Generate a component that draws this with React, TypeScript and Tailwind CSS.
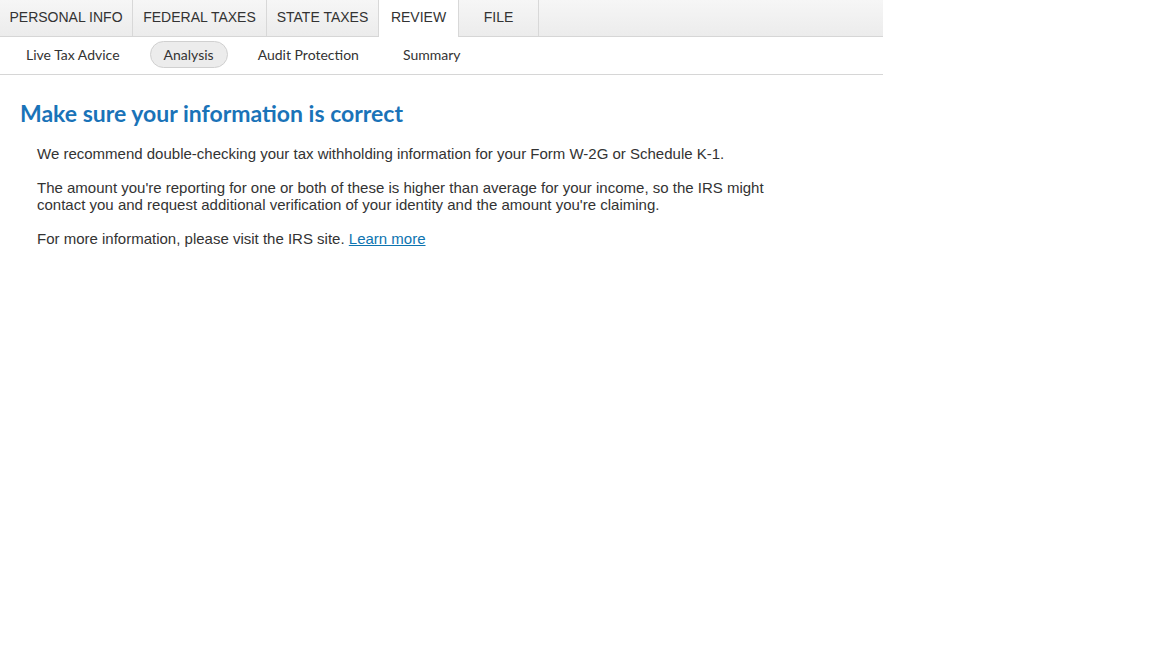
import React from "react";

const tabs = [
  { label: "PERSONAL INFO", w: "w-[133px]" },
  { label: "FEDERAL TAXES", w: "w-[134px]" },
  { label: "STATE TAXES", w: "w-[112px]" },
  { label: "REVIEW", w: "w-[80px]", active: true },
  { label: "FILE", w: "w-[80px]" },
];

const subTabs = [
  { label: "Live Tax Advice" },
  { label: "Analysis", active: true },
  { label: "Audit Protection" },
  { label: "Summary" },
];

export default function App() {
  return (
    <div className="min-h-screen bg-white">
      <div className="w-[883px]">
        {/* Main tabs */}
        <div className="flex h-[37px] border-b border-[#d6d6d6] bg-gradient-to-b from-[#f6f6f6] to-[#ececec]">
          {tabs.map((t) => (
            <div
              key={t.label}
              className={
                "flex items-center justify-center pb-[2px] border-r border-[#d8d8d8] text-[14px] text-[#333] font-['Liberation_Sans',Arial,sans-serif] " +
                t.w +
                (t.active ? " -mb-px bg-white" : "")
              }
            >
              {t.label}
            </div>
          ))}
        </div>

        {/* Sub tabs */}
        <div className="flex h-[38px] items-center gap-[16px] border-b border-[#d6d6d6] pl-[12px] pb-[2px] font-['Lato','Noto_Sans',sans-serif] text-[14px] text-[#333]">
          {subTabs.map((s) => (
            <div
              key={s.label}
              className={
                "rounded-full border px-[13px] py-[2px] " +
                (s.active
                  ? "border-[#d0d0d0] bg-[#ececec]"
                  : "border-transparent")
              }
            >
              {s.label}
            </div>
          ))}
        </div>
      </div>

      {/* Content */}
      <div className="pl-[20px] pt-[21px]">
        <h1 className="font-['Lato','Noto_Sans',sans-serif] text-[23px] font-bold text-[#1a73b8]">
          Make sure your information is correct
        </h1>
        <div className="mt-[14px] pl-[17px] font-['Liberation_Sans',Arial,sans-serif] text-[15px] leading-[17px] text-[#333] space-y-[17px]">
          <p>
            We recommend double-checking your tax withholding information for
            your Form W-2G or Schedule K-1.
          </p>
          <p className="w-[740px]">
            The amount you're reporting for one or both of these is higher than
            average for your income, so the IRS might contact you and request
            additional verification of your identity and the amount you're
            claiming.
          </p>
          <p>
            For more information, please visit the IRS site.{" "}
            <a href="#" className="text-[#0d74b0] underline">
              Learn more
            </a>
          </p>
        </div>
      </div>
    </div>
  );
}
